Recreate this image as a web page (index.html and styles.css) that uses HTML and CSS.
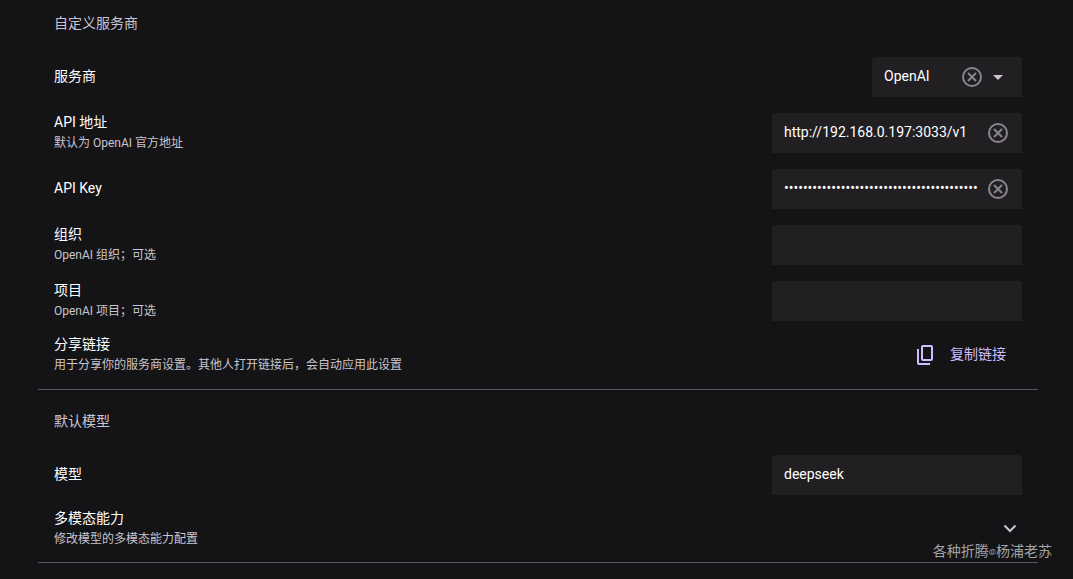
FILE: index.html
```
<!DOCTYPE html>
<html lang="zh-CN">
<head>
    <meta charset="UTF-8">
    <meta name="viewport" content="width=device-width, initial-scale=1.0">
    <title>自定义服务商</title>
    <link rel="stylesheet" href="styles.css">
</head>
<body>
    <main class="settings">
        <section class="group">
            <h2 class="header">自定义服务商</h2>
            <div class="item">
                <label class="label" for="provider">服务商</label>
                <div class="field field-small">
                    <select id="provider">
                        <option>OpenAI</option>
                    </select>
                    <button class="clear" type="button" aria-label="清除服务商">
                        <svg viewBox="0 0 20 20"><circle cx="10" cy="10" r="9"/><path d="M6 6l8 8M14 6l-8 8"/></svg>
                    </button>
                    <svg class="caret" viewBox="0 0 24 24"><path d="M7 10l5 5 5-5z"/></svg>
                </div>
            </div>
            <div class="item">
                <div class="text">
                    <label class="label" for="api-url">API 地址</label>
                    <p class="caption">默认为 OpenAI 官方地址</p>
                </div>
                <div class="field">
                    <input id="api-url" type="text" value="http://192.168.0.197:3033/v1">
                    <button class="clear" type="button" aria-label="清除 API 地址">
                        <svg viewBox="0 0 20 20"><circle cx="10" cy="10" r="9"/><path d="M6 6l8 8M14 6l-8 8"/></svg>
                    </button>
                </div>
            </div>
            <div class="item">
                <label class="label" for="api-key">API Key</label>
                <div class="field">
                    <input id="api-key" type="password" value="sk-000000000000000000000000000000000000000000000000">
                    <button class="clear" type="button" aria-label="清除 API Key">
                        <svg viewBox="0 0 20 20"><circle cx="10" cy="10" r="9"/><path d="M6 6l8 8M14 6l-8 8"/></svg>
                    </button>
                </div>
            </div>
            <div class="item">
                <div class="text">
                    <label class="label" for="organization">组织</label>
                    <p class="caption">OpenAI 组织；可选</p>
                </div>
                <div class="field">
                    <input id="organization" type="text">
                </div>
            </div>
            <div class="item">
                <div class="text">
                    <label class="label" for="project">项目</label>
                    <p class="caption">OpenAI 项目；可选</p>
                </div>
                <div class="field">
                    <input id="project" type="text">
                </div>
            </div>
            <div class="item">
                <div class="text">
                    <div class="label">分享链接</div>
                    <p class="caption">用于分享你的服务商设置。其他人打开链接后，会自动应用此设置</p>
                </div>
                <button class="copy" type="button">
                    <svg viewBox="0 0 24 24"><path d="M9 3h8a1 1 0 0 1 1 1v12a1 1 0 0 1-1 1H9a1 1 0 0 1-1-1V4a1 1 0 0 1 1-1zM4 6v14a1 1 0 0 0 1 1h11"/></svg>
                    <span class="copy-text">复制链接</span>
                </button>
            </div>
        </section>
        <section class="group">
            <h2 class="header">默认模型</h2>
            <div class="item">
                <label class="label" for="model">模型</label>
                <div class="field">
                    <input id="model" type="text" value="deepseek">
                </div>
            </div>
            <div class="item">
                <div class="text">
                    <div class="label">多模态能力</div>
                    <p class="caption">修改模型的多模态能力配置</p>
                </div>
                <button class="expand" type="button" aria-label="展开多模态能力">
                    <svg viewBox="0 0 24 24"><path d="M6.5 8.5l5.5 5.5 5.5-5.5"/></svg>
                </button>
            </div>
        </section>
    </main>
    <div class="watermark">各种折腾<span class="at">@</span>杨浦老苏</div>
</body>
</html>
```
FILE: styles.css
```
* {
    box-sizing: border-box;
}
body {
    position: relative;
    margin: 0;
    background: #141316;
    color: #fff;
    font-family: Roboto, "Noto Sans CJK SC", sans-serif;
    font-size: 14px;
    line-height: 18px;
}
button, input, select {
    margin: 0;
    padding: 0;
    border: none;
    outline: none;
    background: none;
    color: inherit;
    font: inherit;
}
button {
    cursor: pointer;
}
svg {
    display: block;
    fill: none;
    stroke: currentColor;
    stroke-width: 2;
}
.settings {
    padding: 0 35px 0 38px;
}
.group {
    padding-bottom: 8px;
    border-bottom: 1px solid #56555a;
}
.group + .group {
    padding-top: 8px;
    padding-bottom: 7px;
}
.header {
    margin: 0;
    padding: 14px 16px 17px;
    color: #cac4d4;
    font-size: 14px;
    font-weight: 400;
    line-height: 18px;
}
.item {
    display: flex;
    align-items: center;
    justify-content: space-between;
    gap: 16px;
    padding: 8px 16px;
}
.label {
    display: block;
    padding-bottom: 3px;
}
.text .label {
    padding-bottom: 0;
    line-height: 14px;
}
.caption {
    margin: 6px 0 0;
    color: #c9c5cd;
    font-size: 12px;
    line-height: 16px;
}
.field {
    display: flex;
    align-items: center;
    width: 250px;
    height: 40px;
    padding: 0 12px;
    border-radius: 4px 4px 0 0;
    background: #221f23;
}
.field-small {
    width: 150px;
}
.field input, .field select {
    flex: 1;
    min-width: 0;
    height: 40px;
    padding-bottom: 2px;
    appearance: none;
}
.clear {
    margin-left: 8px;
    padding: 0 2px;
    color: #89868c;
}
.clear svg {
    width: 20px;
    height: 20px;
}
.caret {
    width: 24px;
    height: 24px;
    color: #cac4d4;
    fill: currentColor;
    stroke: none;
}
.field-small .clear {
    margin-right: 2px;
}
.copy {
    display: flex;
    align-items: center;
    gap: 12px;
    padding: 0 16px;
    color: #cfbdfe;
}
.copy svg {
    width: 24px;
    height: 24px;
}
.copy-text {
    padding-bottom: 2px;
}
.expand {
    color: #cac4d4;
}
.expand svg {
    width: 24px;
    height: 24px;
}
.watermark {
    position: absolute;
    right: 21px;
    bottom: 2px;
    color: #a3a3a6;
}
.at {
    font-size: 8px;
    vertical-align: 2px;
}
```
